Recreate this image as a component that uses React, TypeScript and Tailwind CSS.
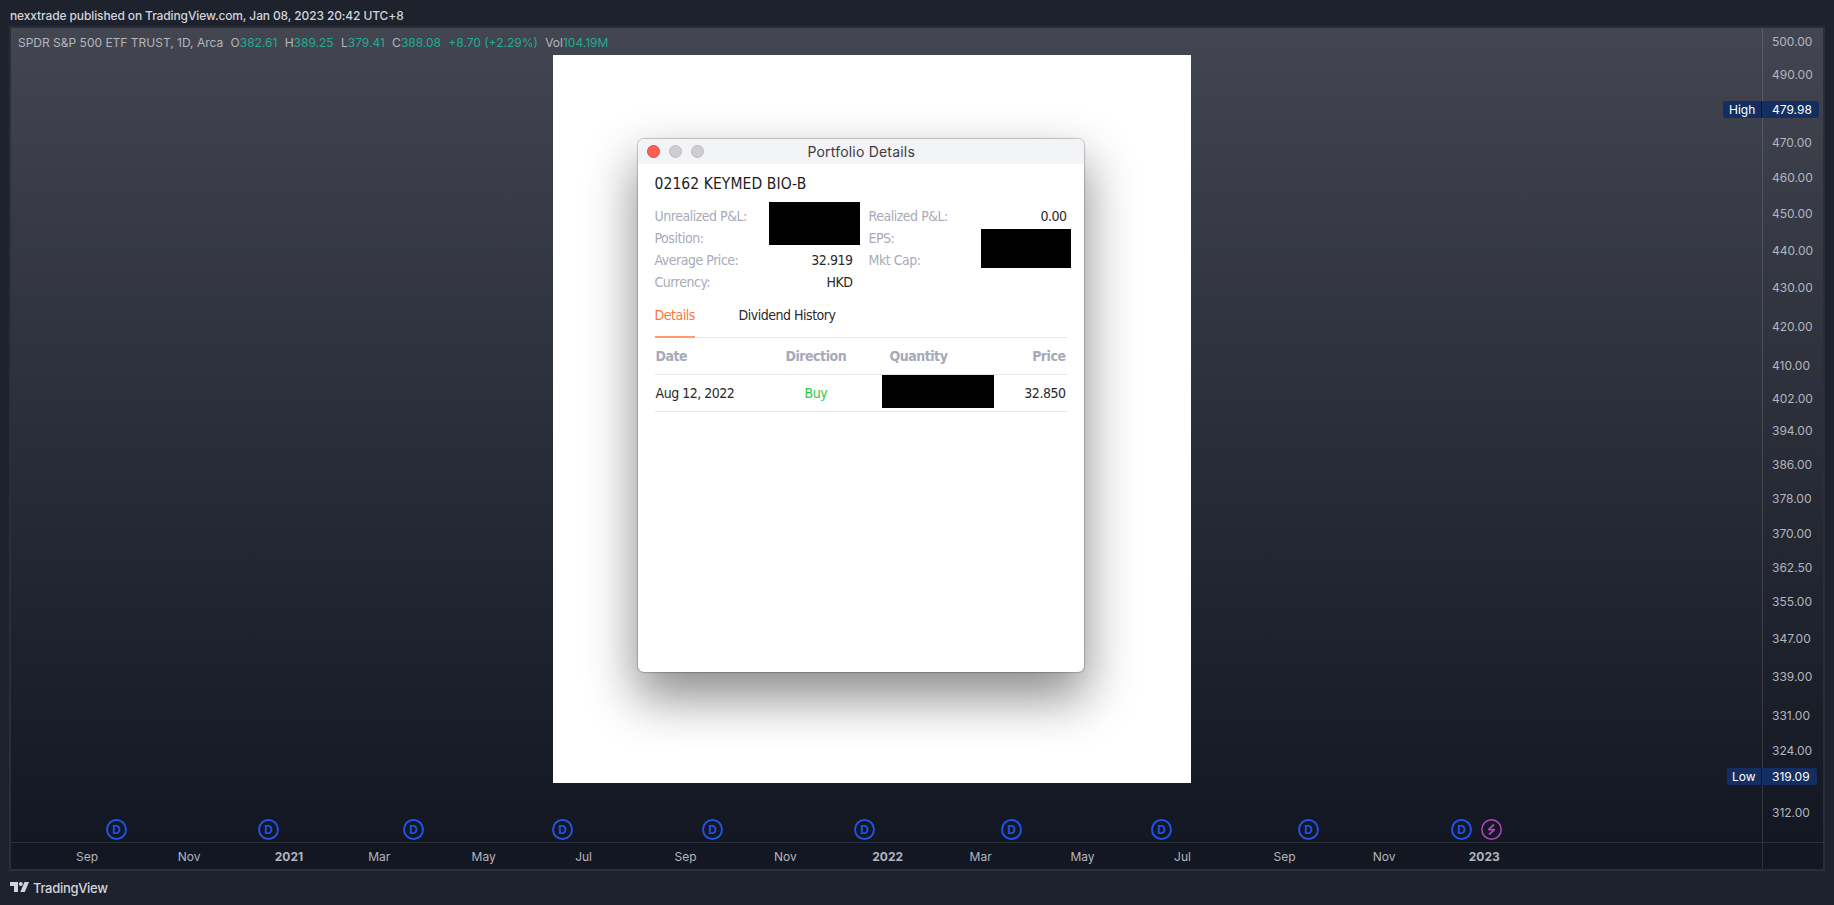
import React from "react";

const LEFT = 10;
const TOP = 27;

const prices: [number, string][] = [
  [41.7, "500.00"], [74.7, "490.00"], [142.7, "470.00"], [177.7, "460.00"], [213.7, "450.00"],
  [250.7, "440.00"], [287.7, "430.00"], [326.7, "420.00"], [365.7, "410.00"], [398.7, "402.00"],
  [430.7, "394.00"], [464.7, "386.00"], [498.7, "378.00"], [533.7, "370.00"], [567.7, "362.50"],
  [601.7, "355.00"], [638.7, "347.00"], [676.7, "339.00"], [715.7, "331.00"], [750.7, "324.00"],
  [781.5, "318.00"], [812.7, "312.00"],
];

const months: [number, string][] = [
  [87, "Sep"], [189, "Nov"], [289, "2021"], [379.3, "Mar"], [483.7, "May"], [583.6, "Jul"],
  [685.5, "Sep"], [785.4, "Nov"], [887.7, "2022"], [980.7, "Mar"], [1082.5, "May"], [1182.5, "Jul"],
  [1284.6, "Sep"], [1384.1, "Nov"], [1484.3, "2023"],
];

const events: [number, string][] = [
  [116.5, "D"], [268.5, "D"], [413.5, "D"], [562.5, "D"], [712.5, "D"], [864.5, "D"],
  [1011.5, "D"], [1161.5, "D"], [1308.5, "D"], [1461.5, "D"], [1491.5, "E"],
];

function PriceAxis() {
  return (
    <div className="flex flex-col pl-[9px] text-[12px] text-[#b2b5be]">
      {prices.map(([y, label], i) => (
        <div key={label} className="flex items-end" style={{ height: y - (i ? prices[i - 1][0] : TOP) }}>
          <span className="flex h-0 items-center">{label}</span>
        </div>
      ))}
    </div>
  );
}

function Track({ items, render }: { items: [number, string][]; render: (s: string) => React.ReactNode }) {
  return (
    <div className="flex h-full items-center">
      {items.map(([x, s], i) => (
        <div key={x} className="flex w-0 shrink-0 justify-center" style={{ marginLeft: x - (i ? items[i - 1][0] : LEFT) }}>
          {render(s)}
        </div>
      ))}
    </div>
  );
}

function Marker({ kind }: { kind: string }) {
  if (kind === "E") {
    return (
      <svg className="size-[21px] shrink-0" viewBox="0 0 21 21">
        <circle cx="10.5" cy="10.5" r="9.7" fill="none" stroke="#ab47bc" strokeWidth="1.5" />
        <path d="M13 5.5 7.4 10.6h6.2L8 15.5" fill="none" stroke="#ab47bc" strokeWidth="1.7" strokeLinejoin="bevel" />
      </svg>
    );
  }
  return (
    <span className="flex size-[21px] shrink-0 items-center justify-center rounded-full border-2 border-[#1e53e5] text-[12px] leading-none font-bold text-[#1e53e5]">
      D
    </span>
  );
}

function Field({ label, value }: { label: string; value?: string }) {
  return (
    <div className="flex h-[22.2px] items-center justify-between">
      <span className="text-[#a9abb9]">{label}</span>
      <span className="text-[#2a2a2a]">{value}</span>
    </div>
  );
}

function PortfolioWindow() {
  return (
    <div className="relative mt-[84px] ml-[84.5px] flex h-[533px] w-[446px] flex-col rounded-[6px] bg-white font-['DejaVu_Sans_Condensed','DejaVu_Sans',sans-serif] text-[14px] tracking-[-0.48px] shadow-[0_0_1px_1px_rgba(0,0,0,0.2),0_24px_50px_2px_rgba(0,0,0,0.45)]">
      <div className="flex h-[25px] items-center gap-[9.3px] rounded-t-[6px] bg-[#f3f4f8] pl-[9px]">
        <i className="size-[13px] rounded-full border border-[#e2463f] bg-[#ff5f57]" />
        <i className="size-[13px] rounded-full border border-[#bcbcbc] bg-[#cecece]" />
        <i className="size-[13px] rounded-full border border-[#bcbcbc] bg-[#cecece]" />
        <span className="ml-[94px] font-[Inter,sans-serif] text-[14px] tracking-[0.2px] text-[#3c3c3e]">Portfolio Details</span>
      </div>
      <div className="flex flex-col px-[17px] pt-[11px]">
        <div className="flex h-[20px] items-center text-[15.5px] tracking-[0.08px] text-[#1c1c1c]">02162 KEYMED BIO-B</div>
        <div className="mt-[10px] flex justify-between">
          <div className="w-[198px]">
            <Field label="Unrealized P&L:" />
            <Field label="Position:" />
            <Field label="Average Price:" value="32.919" />
            <Field label="Currency:" value="HKD" />
          </div>
          <div className="w-[198px]">
            <Field label="Realized P&L:" value="0.00" />
            <Field label="EPS:" />
            <Field label="Mkt Cap:" />
          </div>
        </div>
        <div className="flex h-[44.4px] gap-[44px] border-b border-[#e4e5ef] text-[#2a2a2a]">
          <span className="-mb-px flex h-[44.4px] w-[40px] items-center border-b-2 border-[#ff9d6e] pt-px text-[#ff7733]">Details</span>
          <span className="flex h-[43.4px] items-center">Dividend History</span>
        </div>
        <div className="flex h-[37px] items-center border-b border-[#e4e5ef] pl-px font-bold text-[#a6a9b8]">
          <span className="w-[130px]">Date</span>
          <span className="w-[104px]">Direction</span>
          <span>Quantity</span>
          <span className="ml-auto pr-px">Price</span>
        </div>
        <div className="flex h-[37px] items-center border-b border-[#e4e5ef] pt-px pl-px text-[#2a2a2a]">
          <span className="w-[149px]">Aug 12, 2022</span>
          <span className="text-[#2dc84d]">Buy</span>
          <span className="ml-auto pr-px">32.850</span>
        </div>
      </div>
      <div className="absolute top-[63px] left-[131.5px] h-[43px] w-[91px] bg-black" />
      <div className="absolute top-[90px] left-[343.5px] h-[39px] w-[90px] bg-black" />
      <div className="absolute top-[236px] left-[244px] h-[33.4px] w-[112px] bg-black" />
    </div>
  );
}

export default function App() {
  const v = "text-[#22ab94]";
  return (
    <div className="flex h-[905px] w-[1834px] flex-col overflow-hidden bg-[#1e222d] font-[Inter,sans-serif] whitespace-nowrap">
      <div className="flex h-[27px] shrink-0 items-center pt-[4px] pl-[10px] text-[12px] font-medium tracking-[-0.12px] text-[#d1d4dc]">
        nexxtrade published on TradingView.com, Jan 08, 2023 20:42 UTC+8
      </div>
      <div className="relative ml-[10px] flex h-[843px] w-[1814px] shrink-0 flex-col bg-[#131722] outline-2 -outline-offset-1 outline-[#2a2e39]">
        <div className="flex h-[815px] bg-linear-to-b from-[#434651] to-[#131722]">
          <div className="flex w-[1752px] flex-col">
            <div className="flex h-[28px] shrink-0 items-center gap-[7.3px] pt-[4px] pl-[8px] text-[12px] text-[#b2b5be]">
              <span>SPDR S&amp;P 500 ETF TRUST, 1D, Arca</span>
              <span>O<span className={v}>382.61</span></span>
              <span>H<span className={v}>389.25</span></span>
              <span>L<span className={v}>379.41</span></span>
              <span>C<span className={v}>388.08</span></span>
              <span className={v}>+8.70 (+2.29%)</span>
              <span>Vol<span className={v}>104.19M</span></span>
            </div>
            <div className="ml-[543px] h-[728px] w-[638px] shrink-0 overflow-hidden bg-white">
              <PortfolioWindow />
            </div>
            <div className="mt-[36px] h-[21px]">
              <Track items={events} render={(s) => <Marker kind={s} />} />
            </div>
          </div>
          <div className="w-[62px] border-l border-[rgba(240,243,250,0.14)]">
            <PriceAxis />
          </div>
        </div>
        <div className="flex h-[28px] border-t border-[#2d313b] text-[12px] text-[#b2b5be]">
          <div className="w-[1752px]">
            <Track items={months} render={(s) => <span className={s.startsWith("20") ? "font-bold" : ""}>{s}</span>} />
          </div>
          <div className="w-[62px] border-l border-[#2d313b]" />
        </div>
        <div className="absolute top-[74px] left-[1713px] flex h-[17px] text-[12px] text-white">
          <span className="flex w-[39px] items-center rounded-l-[2px] border-r border-[#131722] bg-[#142e61] pl-[6px]">High</span>
          <span className="flex w-[57px] items-center rounded-r-[2px] bg-[#142e61] pl-[10px]">479.98</span>
        </div>
        <div className="absolute top-[741px] left-[1717px] flex h-[17px] text-[12px] text-white">
          <span className="flex w-[35px] items-center rounded-l-[2px] border-r border-[#131722] bg-[#142e61] pl-[5px]">Low</span>
          <span className="flex w-[55px] items-center rounded-r-[2px] bg-[#142e61] pl-[10px]">319.09</span>
        </div>
      </div>
      <div className="flex h-[35px] items-center gap-[4px] pl-[10px] text-[#d1d4dc]">
        <svg className="mb-[2px] h-[10px] w-[19px]" viewBox="0 0 19 10" fill="currentColor">
          <path d="M0 0h8v10H4V4H0z" />
          <circle cx="10.8" cy="2" r="2" />
          <path d="M14.5 0H19l-4.2 10h-4.5z" />
        </svg>
        <span className="pt-[2px] text-[13px] font-medium tracking-[-0.3px]">TradingView</span>
      </div>
    </div>
  );
}
